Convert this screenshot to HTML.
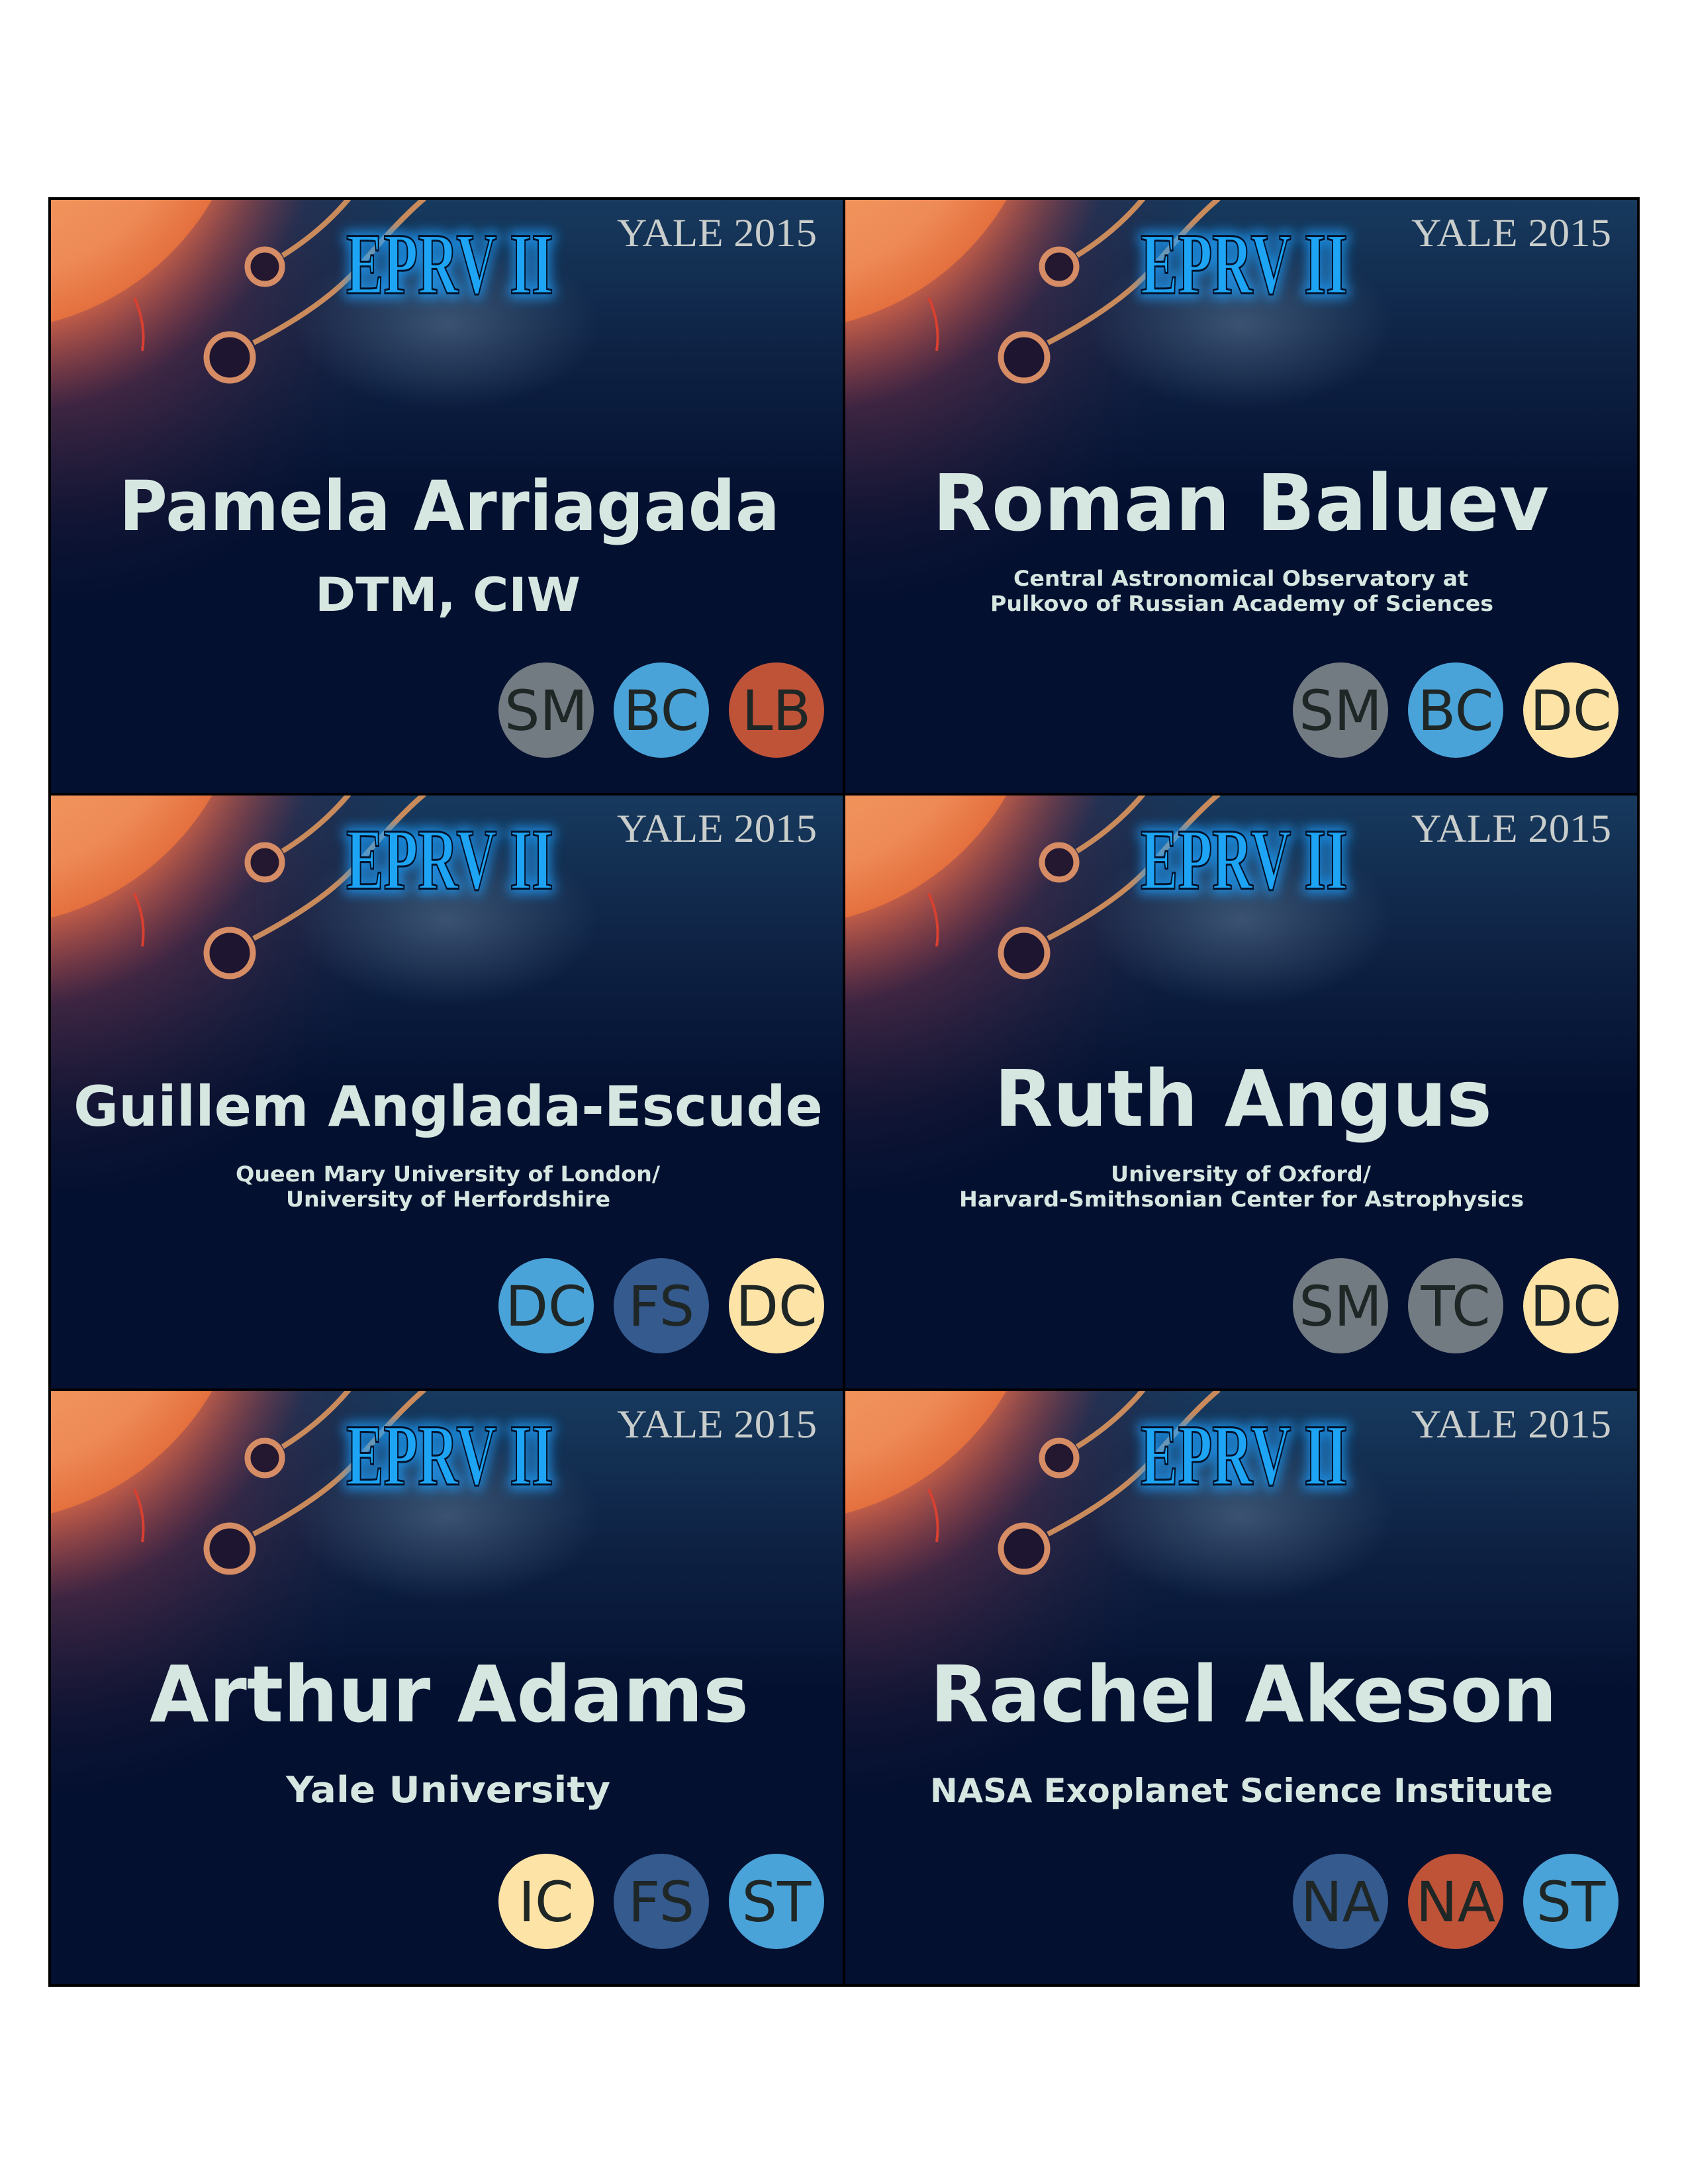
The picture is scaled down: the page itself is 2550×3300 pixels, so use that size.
<!DOCTYPE html>
<html><head><meta charset="utf-8"><style>
html,body{margin:0;padding:0;background:#fff;width:2550px;height:3300px;overflow:hidden}
svg{display:block}
.nm{font-family:"DejaVu Sans","Liberation Sans",sans-serif;font-weight:bold;fill:#d6e6e1}
.af{font-family:"DejaVu Sans","Liberation Sans",sans-serif;font-weight:bold;fill:#d6e6e1}
.ci{font-family:"DejaVu Sans","Liberation Sans",sans-serif;fill:#1f2626;font-size:84px}
.ep{font-family:"Liberation Serif",serif;font-weight:bold;font-size:132px;fill:#1ea4f4;stroke:#03122a;stroke-width:3}
.epg{font-family:"Liberation Serif",serif;font-weight:bold;font-size:132px;fill:#1aa0ff;stroke:#1aa0ff;stroke-width:14}
.ya{font-family:"Liberation Serif",serif;font-size:60px;fill:#c9cdcb}
</style></head><body>
<svg width="2550" height="3300" viewBox="0 0 2550 3300" xmlns="http://www.w3.org/2000/svg">
<defs>
<linearGradient id="tg" x1="0" y1="0" x2="0" y2="1">
<stop offset="0" stop-color="#173a5e"/><stop offset="0.5" stop-color="#0e2244"/><stop offset="1" stop-color="#041030"/>
</linearGradient>
<radialGradient id="warm" gradientUnits="userSpaceOnUse" cx="0" cy="60" r="560">
<stop offset="0" stop-color="#b05048" stop-opacity="0.95"/><stop offset="0.45" stop-color="#5a2a44" stop-opacity="0.65"/><stop offset="1" stop-color="#1a1a3a" stop-opacity="0"/>
</radialGradient>
<radialGradient id="sun" gradientUnits="userSpaceOnUse" cx="-100" cy="-200" r="400">
<stop offset="0" stop-color="#f7a868"/><stop offset="0.8" stop-color="#ee8a56"/><stop offset="1" stop-color="#e4703e"/>
</radialGradient>
<radialGradient id="sglow" gradientUnits="userSpaceOnUse" cx="-100" cy="-200" r="530">
<stop offset="0.72" stop-color="#e87048" stop-opacity="0.8"/><stop offset="1" stop-color="#a04048" stop-opacity="0"/>
</radialGradient>
<radialGradient id="eglow" cx="0.5" cy="0.5" r="0.5">
<stop offset="0" stop-color="#9fb8d0" stop-opacity="0.3"/><stop offset="1" stop-color="#9fb8d0" stop-opacity="0"/>
</radialGradient>
<filter id="blur" x="-20%" y="-40%" width="140%" height="180%"><feGaussianBlur stdDeviation="9"/></filter>
<clipPath id="cc"><rect width="1200" height="900"/></clipPath>
<g id="hdr">
<rect width="1200" height="900" fill="#041030"/>
<rect width="1200" height="460" fill="url(#tg)"/>
<rect width="1200" height="900" fill="url(#warm)"/>
<ellipse cx="600" cy="190" rx="230" ry="130" fill="url(#eglow)"/>
<circle cx="-100" cy="-200" r="530" fill="url(#sglow)"/>
<circle cx="-100" cy="-200" r="400" fill="url(#sun)"/>
<path d="M128 150 q18 40 12 80" stroke="#d84030" stroke-width="4" fill="none"/>
<path d="M352 86 Q410 50 452 0" stroke="#c98a5c" stroke-width="8" fill="none"/>
<path d="M308 218 Q420 160 470 100 Q530 30 566 0" stroke="#c98a5c" stroke-width="8" fill="none"/>
<circle cx="325" cy="103" r="26" fill="#241830" stroke="#d68c64" stroke-width="9"/>
<circle cx="272" cy="240" r="35" fill="#1e1530" stroke="#d68c64" stroke-width="9"/>
</g>
</defs>

<g transform="translate(75,300)" clip-path="url(#cc)">
<use href="#hdr"/>
<text class="epg" x="448" y="143" textLength="313" lengthAdjust="spacingAndGlyphs" filter="url(#blur)" opacity="0.8">EPRV II</text>
<text class="ep" x="448" y="143" textLength="313" lengthAdjust="spacingAndGlyphs">EPRV II</text>
<text class="ya" x="857" y="72" textLength="302" lengthAdjust="spacingAndGlyphs">YALE 2015</text>
<text class="nm" x="105" y="501" font-size="104" textLength="998" lengthAdjust="spacingAndGlyphs">Pamela Arriagada</text>
<text class="af" x="401" y="623" font-size="70" textLength="401" lengthAdjust="spacingAndGlyphs">DTM, CIW</text>
<circle cx="750" cy="773" r="72" fill="#737b82"/><text class="ci" x="750" y="803" text-anchor="middle">SM</text>
<circle cx="924" cy="773" r="72" fill="#4aa3d8"/><text class="ci" x="924" y="803" text-anchor="middle">BC</text>
<circle cx="1098" cy="773" r="72" fill="#bf5338"/><text class="ci" x="1098" y="803" text-anchor="middle">LB</text>
</g>

<g transform="translate(1275,300)" clip-path="url(#cc)">
<use href="#hdr"/>
<text class="epg" x="448" y="143" textLength="313" lengthAdjust="spacingAndGlyphs" filter="url(#blur)" opacity="0.8">EPRV II</text>
<text class="ep" x="448" y="143" textLength="313" lengthAdjust="spacingAndGlyphs">EPRV II</text>
<text class="ya" x="857" y="72" textLength="302" lengthAdjust="spacingAndGlyphs">YALE 2015</text>
<text class="nm" x="134" y="501" font-size="118" textLength="931" lengthAdjust="spacingAndGlyphs">Roman Baluev</text>
<text class="af" x="256" y="585" font-size="32" textLength="687" lengthAdjust="spacingAndGlyphs">Central Astronomical Observatory at</text>
<text class="af" x="221" y="623" font-size="32" textLength="760" lengthAdjust="spacingAndGlyphs">Pulkovo of Russian Academy of Sciences</text>
<circle cx="750" cy="773" r="72" fill="#737b82"/><text class="ci" x="750" y="803" text-anchor="middle">SM</text>
<circle cx="924" cy="773" r="72" fill="#4aa3d8"/><text class="ci" x="924" y="803" text-anchor="middle">BC</text>
<circle cx="1098" cy="773" r="72" fill="#fde3a6"/><text class="ci" x="1098" y="803" text-anchor="middle">DC</text>
</g>

<g transform="translate(75,1200)" clip-path="url(#cc)">
<use href="#hdr"/>
<text class="epg" x="448" y="143" textLength="313" lengthAdjust="spacingAndGlyphs" filter="url(#blur)" opacity="0.8">EPRV II</text>
<text class="ep" x="448" y="143" textLength="313" lengthAdjust="spacingAndGlyphs">EPRV II</text>
<text class="ya" x="857" y="72" textLength="302" lengthAdjust="spacingAndGlyphs">YALE 2015</text>
<text class="nm" x="36" y="501" font-size="84" textLength="1132" lengthAdjust="spacingAndGlyphs">Guillem Anglada-Escude</text>
<text class="af" x="281" y="585" font-size="32" textLength="641" lengthAdjust="spacingAndGlyphs">Queen Mary University of London/</text>
<text class="af" x="357" y="623" font-size="32" textLength="490" lengthAdjust="spacingAndGlyphs">University of Herfordshire</text>
<circle cx="750" cy="773" r="72" fill="#4aa3d8"/><text class="ci" x="750" y="803" text-anchor="middle">DC</text>
<circle cx="924" cy="773" r="72" fill="#345a8e"/><text class="ci" x="924" y="803" text-anchor="middle">FS</text>
<circle cx="1098" cy="773" r="72" fill="#fde3a6"/><text class="ci" x="1098" y="803" text-anchor="middle">DC</text>
</g>

<g transform="translate(1275,1200)" clip-path="url(#cc)">
<use href="#hdr"/>
<text class="epg" x="448" y="143" textLength="313" lengthAdjust="spacingAndGlyphs" filter="url(#blur)" opacity="0.8">EPRV II</text>
<text class="ep" x="448" y="143" textLength="313" lengthAdjust="spacingAndGlyphs">EPRV II</text>
<text class="ya" x="857" y="72" textLength="302" lengthAdjust="spacingAndGlyphs">YALE 2015</text>
<text class="nm" x="227" y="501" font-size="118" textLength="752" lengthAdjust="spacingAndGlyphs">Ruth Angus</text>
<text class="af" x="403" y="585" font-size="32" textLength="393" lengthAdjust="spacingAndGlyphs">University of Oxford/</text>
<text class="af" x="174" y="623" font-size="32" textLength="853" lengthAdjust="spacingAndGlyphs">Harvard-Smithsonian Center for Astrophysics</text>
<circle cx="750" cy="773" r="72" fill="#737b82"/><text class="ci" x="750" y="803" text-anchor="middle">SM</text>
<circle cx="924" cy="773" r="72" fill="#737b82"/><text class="ci" x="924" y="803" text-anchor="middle">TC</text>
<circle cx="1098" cy="773" r="72" fill="#fde3a6"/><text class="ci" x="1098" y="803" text-anchor="middle">DC</text>
</g>

<g transform="translate(75,2100)" clip-path="url(#cc)">
<use href="#hdr"/>
<text class="epg" x="448" y="143" textLength="313" lengthAdjust="spacingAndGlyphs" filter="url(#blur)" opacity="0.8">EPRV II</text>
<text class="ep" x="448" y="143" textLength="313" lengthAdjust="spacingAndGlyphs">EPRV II</text>
<text class="ya" x="857" y="72" textLength="302" lengthAdjust="spacingAndGlyphs">YALE 2015</text>
<text class="nm" x="151" y="501" font-size="118" textLength="905" lengthAdjust="spacingAndGlyphs">Arthur Adams</text>
<text class="af" x="357" y="623" font-size="54" textLength="490" lengthAdjust="spacingAndGlyphs">Yale University</text>
<circle cx="750" cy="773" r="72" fill="#fde3a6"/><text class="ci" x="750" y="803" text-anchor="middle">IC</text>
<circle cx="924" cy="773" r="72" fill="#345a8e"/><text class="ci" x="924" y="803" text-anchor="middle">FS</text>
<circle cx="1098" cy="773" r="72" fill="#4aa3d8"/><text class="ci" x="1098" y="803" text-anchor="middle">ST</text>
</g>

<g transform="translate(1275,2100)" clip-path="url(#cc)">
<use href="#hdr"/>
<text class="epg" x="448" y="143" textLength="313" lengthAdjust="spacingAndGlyphs" filter="url(#blur)" opacity="0.8">EPRV II</text>
<text class="ep" x="448" y="143" textLength="313" lengthAdjust="spacingAndGlyphs">EPRV II</text>
<text class="ya" x="857" y="72" textLength="302" lengthAdjust="spacingAndGlyphs">YALE 2015</text>
<text class="nm" x="130" y="501" font-size="118" textLength="947" lengthAdjust="spacingAndGlyphs">Rachel Akeson</text>
<text class="af" x="130" y="623" font-size="50" textLength="941" lengthAdjust="spacingAndGlyphs">NASA Exoplanet Science Institute</text>
<circle cx="750" cy="773" r="72" fill="#345a8e"/><text class="ci" x="750" y="803" text-anchor="middle">NA</text>
<circle cx="924" cy="773" r="72" fill="#bf5338"/><text class="ci" x="924" y="803" text-anchor="middle">NA</text>
<circle cx="1098" cy="773" r="72" fill="#4aa3d8"/><text class="ci" x="1098" y="803" text-anchor="middle">ST</text>
</g>

<g stroke="#000" stroke-width="4" fill="none">
<rect x="75" y="300" width="2400" height="2700"/>
<line x1="1275" y1="300" x2="1275" y2="3000"/>
<line x1="75" y1="1200" x2="2475" y2="1200"/>
<line x1="75" y1="2100" x2="2475" y2="2100"/>
</g>
</svg>
</body></html>
